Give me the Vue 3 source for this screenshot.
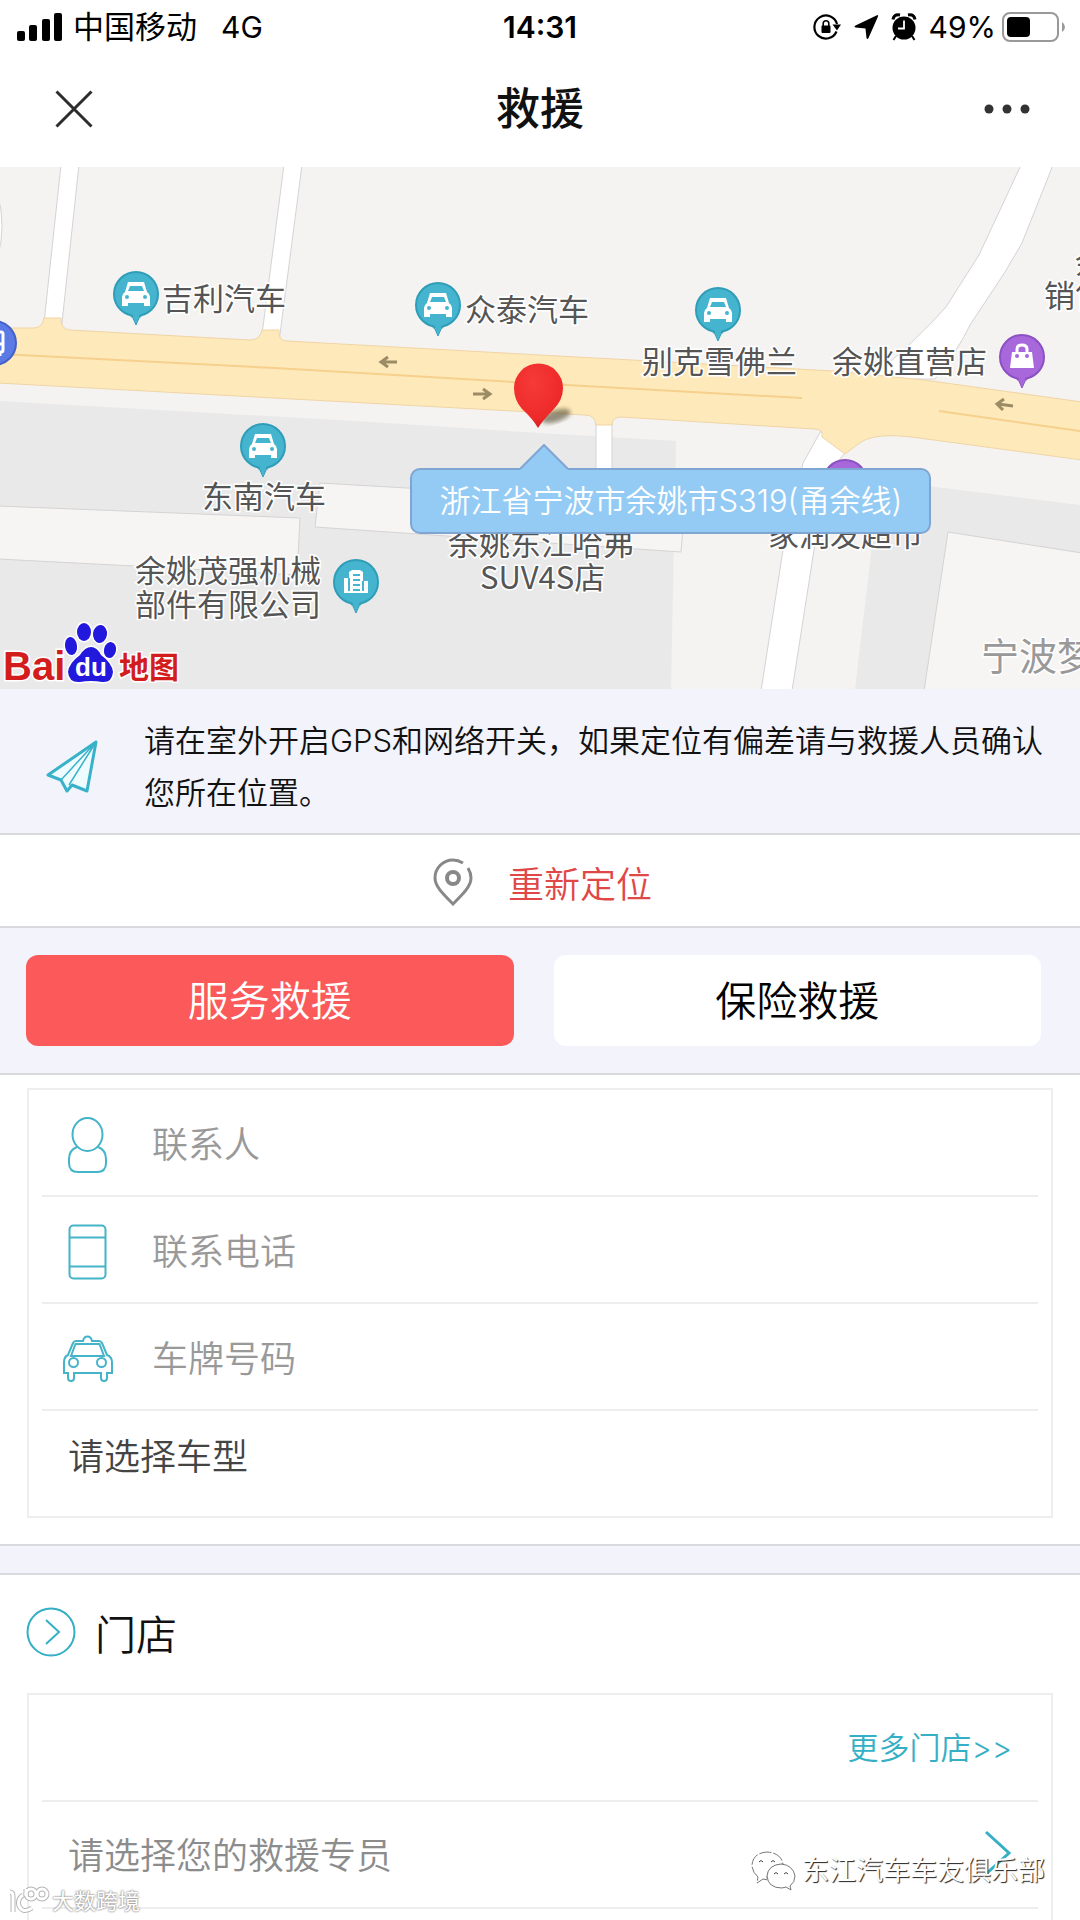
<template>
    <div class="page">
        <header class="status-bar">
            <div class="status-bar__side">
                <svg width="49" height="28" viewBox="0 0 49 28">
                    <rect x="3" y="18" width="8" height="10" rx="2" />
                    <rect x="15" y="12" width="8" height="16" rx="2" />
                    <rect x="28" y="6" width="8" height="22" rx="2" />
                    <rect x="40" y="0" width="8" height="28" rx="2" />
                </svg>
                <span class="status-bar__carrier">中国移动</span>
                <span>4G</span>
            </div>
            <span class="status-bar__time">14:31</span>
            <div class="status-bar__side status-bar__side--right">
                <div class="status-bar__icons">
                    <svg width="28" height="28" viewBox="0 0 28 28">
                        <path d="M23.500 18.500 A11.500 11.500 0 1 1 24 11" fill="none" stroke="#000" stroke-width="2.200" />
                        <path d="M19.500 11.500 H28 L24 17.500 Z" />
                        <rect x="8.500" y="12.500" width="9" height="7.500" rx="1" />
                        <path d="M10.200 13 V10.500 a2.800 2.800 0 0 1 5.600 0 V13" fill="none" stroke="#000" stroke-width="1.600" />
                    </svg>
                    <svg width="26" height="28" viewBox="0 0 26 28">
                        <path d="M24.500 2 Q25.500 2 25 3.500 L15.500 25 Q14.500 27 13.500 25 L12.500 15.500 L2.500 14.500 Q0.500 13.500 2.500 12.500 Z" />
                    </svg>
                    <svg width="26" height="28" viewBox="0 0 26 28">
                        <circle cx="13" cy="15" r="11.500" />
                        <path d="M2 6.500 Q3 1 9 2 M24 6.500 Q23 1 17 2" fill="none" stroke="#000" stroke-width="3" />
                        <path d="M5 23 L2.500 27 M21 23 L23.500 27" stroke="#000" stroke-width="2" />
                        <path d="M13 7.500 V15.500 H7" fill="none" stroke="#fff" stroke-width="1.800" />
                    </svg>
                </div>
                <span>49%</span>
                <svg width="64" height="30" viewBox="0 0 64 30">
                    <rect x="1" y="1" width="55" height="28" rx="7" fill="none" stroke="#999" stroke-width="2" />
                    <rect x="5" y="5" width="23" height="20" rx="4" />
                    <path d="M60 10 Q63 12 63 15 Q63 18 60 20 Z" fill="#999" />
                </svg>
            </div>
        </header>

        <nav class="nav-bar">
            <button class="nav-bar__btn" type="button" aria-label="关闭">
                <svg width="44" height="38" viewBox="0 0 44 38">
                    <path d="M6.500 1.500 L41.500 36.500 M41.500 1.500 L6.500 36.500" stroke="#2c2c2c" stroke-width="3" />
                </svg>
            </button>
            <h1 class="nav-bar__title">救援</h1>
            <button class="nav-bar__btn nav-bar__btn--right" type="button" aria-label="更多">
                <svg width="46" height="10" viewBox="0 0 46 10" fill="#333">
                    <circle cx="5" cy="5" r="4.500" />
                    <circle cx="23" cy="5" r="4.500" />
                    <circle cx="41" cy="5" r="4.500" />
                </svg>
            </button>
        </nav>

        <section class="map">
            <svg class="map__canvas" viewBox="0 0 1080 522" preserveAspectRatio="xMidYMid slice">
                <defs>
                    <radialGradient id="redPin" cx="0.4" cy="0.3" r="0.8">
                        <stop offset="0" stop-color="#f53a38" />
                        <stop offset="0.7" stop-color="#ee2a2a" />
                        <stop offset="1" stop-color="#c41a1c" />
                    </radialGradient>
                    <filter id="soft">
                        <feGaussianBlur stdDeviation="2" />
                    </filter>
                </defs>
                <rect width="1080" height="522" fill="#f4f3f1" />
                <!-- 街区 -->
                <path d="M0 234 L355 254 L540 266 L676 274 L671 522 H0 Z" fill="#e9e9e9" />
                <path d="M880 311 L936 320 L1080 338 V522 H855 Z" fill="#e9e9e9" />
                <g fill="#f6f5f3" stroke="#d5d3d3" stroke-width="1">
                    <path d="M-2 339 L300 351 L297 408 L134 399 L-2 392 Z" />
                    <path d="M320 316 L685 337 L681 385 L315 360 Z" />
                    <path d="M948 365 L1082 386 V524 H924 Z" />
                    <path d="M-2 28 Q6 58 -2 90 Z" fill="#fff" />
                </g>
                <!-- 小路 -->
                <g fill="#fff" stroke="#d4d2d6" stroke-width="1">
                    <path d="M61 -2 L43 165 H61 L79 -2 Z" />
                    <path d="M284 -2 L261 175 H279 L302 -2 Z" />
                    <path d="M1021 -2 L979 88 L946 140 Q915 175 870 212 H935 Q960 180 970 158 L1005 105 L1022 76 L1053 -2 Z" />
                    <path d="M596 245 V310 H612 V245 Z" />
                    <path d="M822 262 L803 296 L783 383 L761 524 H792 L814 383 L833 300 L850 280 Z" />
                </g>
                <!-- 主干道 -->
                <path d="M-2 161 H34 Q42 161 44 151 H61 Q60 162 70 163 L250 173 Q260 173 262 163 H279 Q278 174 287 174 L540 188 L834 204 L924 213 L1082 235 V293 L919 271 Q872 264 857 278 L845 287 L822 270 Q823 262 815 262 L621 250 Q612 250 612 258 H596 Q595 248 585 248 L513 244 L-2 216 Z"
                    fill="#fee9ba" stroke="#f0d4a6" stroke-width="1" />
                <path d="M0 187 L275 201 L513 215 L802 231 M939 244 L1080 264" fill="none" stroke="#f6d08c" stroke-width="2" />
                <g fill="none" stroke="#9c8c66" stroke-width="3">
                    <path d="M397 195 H382 M388 190 L381 195 L388 200" />
                    <path d="M473 227 H489 M483 222 L490 227 L483 232" />
                    <path d="M1013 239 L998 237 M1004 232 L997 237 L1003 243" />
                </g>

                <g v-for="pin in pins" :key="pin.x" :transform="`translate(${pin.x} ${pin.y})`">
                    <path d="M-7 20 Q-2 24 0 31 Q2 24 7 20 Z" :fill="pin.color" :stroke="pin.edge" />
                    <circle r="22" :fill="pin.color" :stroke="pin.edge" stroke-width="2" />
                    <path d="M-4 20 Q-1 24 0 29 Q1 24 4 20 Z" :fill="pin.color" />
                    <g v-if="pin.icon === 'car'">
                        <path d="M-8 -12 H8 L11 -2 Q14 0 14 3 V12 H8 V9 H-8 V12 H-14 V3 Q-14 0 -11 -2 Z" fill="#fff" />
                        <path d="M-6 -8 H6 L8 -3 H-8 Z" :fill="pin.color" />
                        <circle cx="-9" cy="3" r="2" :fill="pin.color" />
                        <circle cx="9" cy="3" r="2" :fill="pin.color" />
                    </g>
                    <g v-if="pin.icon === 'bag'">
                        <path d="M-10 -5 H10 L12 11 H-12 Z" fill="#fff" />
                        <path d="M-5 -4 V-8 Q-5 -12 0 -12 Q5 -12 5 -8 V-4" fill="none" stroke="#fff" stroke-width="3" />
                        <circle cx="-5" cy="-1" r="2" :fill="pin.color" />
                        <circle cx="5" cy="-1" r="2" :fill="pin.color" />
                    </g>
                    <g v-if="pin.icon === 'office'">
                        <path d="M-12 11 V-4 H-7 V-10 L-4 -12 H4 L7 -10 V-1 H12 V11 Z" fill="#fff" />
                        <path d="M-7 -4 V9 M7 -1 V9 M-3 -7 H4 M-3 -2 H4 M-3 3 H4 M-3 8 H4" :stroke="pin.color" stroke-width="2" />
                    </g>
                    <g v-if="pin.icon === 'bus'">
                        <rect x="-8" y="-11" width="17" height="20" rx="2" fill="none" stroke="#fff" stroke-width="3" />
                        <path d="M-8 1 H9 M6 9 V13" stroke="#fff" stroke-width="3" />
                    </g>
                </g>

                <text v-for="label in labels" :key="label.text + label.x" class="map__label" :x="label.x"
                    :y="label.y">{{ label.text }}</text>
                <text class="map__label map__label--area" x="981" y="503">宁波梦</text>

                <ellipse cx="556" cy="249" rx="15" ry="6" fill="#6b6247" opacity="0.7" filter="url(#soft)"
                    transform="rotate(-18 556 249)" />
                <path d="M538 261 Q533 252 522 242 Q514 233 514 221 A24.500 24.500 0 0 1 563 221 Q563 233 553 243 Q543 253 538 261 Z"
                    fill="url(#redPin)" />

                <g>
                    <g stroke="#fff" stroke-width="3" paint-order="stroke" fill="#2319dc">
                        <ellipse cx="84" cy="465" rx="7" ry="9" />
                        <ellipse cx="100" cy="467" rx="7" ry="9" transform="rotate(8 100 467)" />
                        <ellipse cx="71" cy="479" rx="6" ry="9" transform="rotate(-8 71 479)" />
                        <ellipse cx="110" cy="483" rx="6" ry="8" transform="rotate(12 110 483)" />
                        <path d="M91 480 Q97 480 101 488 Q112 496 113 505 Q112 516 102 515 Q91 513 80 515 Q69 516 68 505 Q69 496 80 488 Q85 480 91 480 Z" />
                    </g>
                    <text x="3" y="513" class="map__logo-text map__logo-text--latin">Bai</text>
                    <text x="75" y="509" class="map__logo-du">du</text>
                    <text x="119" y="511" class="map__logo-text">地图</text>
                </g>
            </svg>
            <div class="address">
                <svg class="address__arrow" width="48" height="26" viewBox="0 0 48 26">
                    <path d="M0 25 L24 1 L48 25 V26 H0 Z" fill="#94cbf5" />
                    <path d="M0 25 L24 1 L48 25" fill="none" stroke="#7fa6d2" stroke-width="2" />
                </svg>
                浙江省宁波市余姚市S319(甬余线)
            </div>
        </section>

        <section class="notice">
            <svg width="52" height="54" viewBox="0 0 52 54" fill="none" stroke="#38b2c8" stroke-width="3"
                stroke-linejoin="round">
                <path d="M50 2 L2 35 L15 40 L21 51 L26 45 L41 51 Z" fill="#eefcff" />
                <path d="M50 2 L15 40 M50 2 L23 45" stroke-width="1.500" />
            </svg>
            <p class="notice__text">请在室外开启GPS和网络开关，如果定位有偏差请与救援人员确认您所在位置。</p>
        </section>

        <button class="relocate" type="button">
            <svg width="40" height="48" viewBox="0 0 40 48" fill="none" stroke="#888" stroke-width="3">
                <path d="M30 5 Q25 2 20 2 C10 2 2 10 2 20 C2 28 9 35 20 46 C31 35 38 28 38 20 Q38 15 35 10" />
                <circle cx="20" cy="20" r="6" stroke-width="4" />
            </svg>
            <span>重新定位</span>
        </button>

        <div class="tabs">
            <button v-for="tab in tabs" :key="tab" type="button" class="tabs__btn"
                :class="{ 'tabs__btn--active': tab === activeTab }" @click="activeTab = tab">{{ tab }}</button>
        </div>

        <form class="card card--form" @submit.prevent>
            <label class="row row--field">
                <svg class="row__icon" width="50" height="56" viewBox="0 0 50 56">
                    <path d="M14 30 Q6 33 6 42 V46 Q6 55 15 55 H34 Q43 55 43 46 V42 Q43 33 35 30" />
                    <ellipse cx="24.500" cy="17.500" rx="15" ry="16.500" />
                </svg>
                <input v-model="form.name" class="row__input" type="text" placeholder="联系人" aria-label="联系人" />
            </label>
            <label class="row row--field">
                <svg class="row__icon" width="50" height="56" viewBox="0 0 50 56">
                    <rect x="6.500" y="1.500" width="36" height="53" rx="4" />
                    <path d="M7 13.500 H42 M7 42.500 H42" />
                </svg>
                <input v-model="form.phone" class="row__input" type="tel" placeholder="联系电话" aria-label="联系电话" />
            </label>
            <label class="row row--field">
                <svg class="row__icon" width="50" height="56" viewBox="0 0 50 56">
                    <path d="M20 10 Q21 5.500 24.500 5.500 Q28 5.500 29 10 H36 Q38 10 39 12 L44 24 Q49 26 49 31 V42 H44 V47 Q44 50 41 50 Q38 50 38 47 V42 H11 V47 Q11 50 8 50 Q5 50 5 47 V42 H1 V31 Q1 26 5 24 L10 12 Q11 10 13 10 Z" />
                    <path d="M8 25 L12.500 13 H36.500 L41 25 Z" />
                    <circle cx="10.500" cy="31.500" r="4.500" />
                    <circle cx="38.500" cy="31.500" r="4.500" />
                </svg>
                <input v-model="form.plate" class="row__input" type="text" placeholder="车牌号码" aria-label="车牌号码" />
            </label>
            <div class="row row--select">
                <select v-model="form.model" class="row__select" aria-label="请选择车型">
                    <option value="">请选择车型</option>
                </select>
            </div>
        </form>

        <div class="divider"></div>

        <h2 class="shop-title">
            <svg width="50" height="50" viewBox="0 0 50 50" fill="none" stroke="#35afc5" stroke-width="2">
                <circle cx="25" cy="25" r="23.500" />
                <path d="M20 13 L33 25 L20 37" />
            </svg>
            门店
        </h2>

        <section class="card card--shop">
            <div class="row row--more">
                <a class="more-link" href="#">更多门店&gt;&gt;</a>
            </div>
            <button class="row row--staff" type="button">
                <span>请选择您的救援专员</span>
                <svg width="28" height="48" viewBox="0 0 28 48">
                    <path d="M2 3 L25 24 L2 45" fill="none" stroke="#35afc5" stroke-width="3" />
                </svg>
            </button>
        </section>

        <div class="watermark watermark--left">
            <svg width="42" height="30" viewBox="0 0 42 30" fill="none">
                <g stroke="#b5b5b5" stroke-width="5">
                    <path d="M2 6 Q5 6 5 10 V26 M15 9 Q9 13 11 20 Q15 28 24 22 M18 3 V10" />
                    <circle cx="23" cy="8" r="5" />
                    <circle cx="34" cy="8" r="5" />
                </g>
                <g stroke="#fff" stroke-width="3">
                    <path d="M2 6 Q5 6 5 10 V26 M15 9 Q9 13 11 20 Q15 28 24 22 M18 3 V10" />
                    <circle cx="23" cy="8" r="5" />
                    <circle cx="34" cy="8" r="5" />
                </g>
            </svg>
            <span>大数跨境</span>
        </div>
        <div class="watermark watermark--right">
            <svg width="46" height="42" viewBox="0 0 46 42" fill="#fff" stroke="#777" stroke-width="1">
                <path d="M8 27 Q2 22 2 15 Q3 3 17 2 Q31 3 33 14 Q18 15 17 27 Q17 29 18 30 L13 29 L7 33 Z" stroke-dasharray="12 2" />
                <path d="M40 36 Q45 32 45 26 Q43 15 31 14 Q18 15 17 26 Q18 38 32 38 L36 37 L41 40 Z" />
                <path d="M9 12 Q11 9 13 12 M21 12 Q23 9 25 12 M24 24 Q26 21 28 24 M34 24 Q36 21 38 24" fill="none" stroke="#444" />
            </svg>
            <span>东江汽车车友俱乐部</span>
        </div>
    </div>
</template>

<script setup>
import { ref, reactive } from 'vue';

const tabs = ['服务救援', '保险救援'];
const activeTab = ref('服务救援');

const form = reactive({
    name: '',
    phone: '',
    plate: '',
    model: ''
});

const teal = { color: '#45b5cf', edge: '#2f9db8' };
const purple = { color: '#a868dc', edge: '#8b50c2' };

const pins = [
    { x: 136, y: 127, icon: 'car', ...teal },
    { x: 438, y: 138, icon: 'car', ...teal },
    { x: 718, y: 143, icon: 'car', ...teal },
    { x: 263, y: 279, icon: 'car', ...teal },
    { x: 356, y: 415, icon: 'office', ...teal },
    { x: 1022, y: 190, icon: 'bag', ...purple },
    { x: 845, y: 315, icon: '', ...purple },
    { x: -6, y: 176, icon: 'bus', color: '#5b7ae6', edge: '#4460c8' }
];

const labels = [
    { text: '吉利汽车', x: 162, y: 143 },
    { text: '众泰汽车', x: 465, y: 154 },
    { text: '别克雪佛兰', x: 642, y: 206 },
    { text: '余姚直营店', x: 832, y: 206 },
    { text: '余姚', x: 1075, y: 107 },
    { text: '销售', x: 1044, y: 140 },
    { text: '东南汽车', x: 202, y: 341 },
    { text: '余姚茂强机械', x: 135, y: 415 },
    { text: '部件有限公司', x: 135, y: 449 },
    { text: '余姚东江哈弗', x: 448, y: 388 },
    { text: 'SUV4S店', x: 480, y: 422 },
    { text: '家润发超市', x: 768, y: 379 }
];
</script>

<style>
body {
    margin: 0;
    background: #fff;
}
</style>

<style scoped>
.page {
    position: relative;
    display: flex;
    flex-direction: column;
    min-height: 100vh;
    overflow: hidden;
    background: #fff;
    color: #111;
    font-family: Inter, "Noto Sans CJK SC", sans-serif;
    font-weight: 350;
}

button,
input,
select {
    font: inherit;
    color: inherit;
    border: none;
    background: none;
    padding: 0;
    margin: 0;
    border-radius: 0;
}

button {
    cursor: pointer;
}

svg {
    display: block;
    flex-shrink: 0;
}

.status-bar {
    display: grid;
    grid-template-columns: 1fr auto 1fr;
    align-items: center;
    height: 54px;
    padding: 0 14px;
    font-size: 30px;
    font-weight: 400;
    line-height: 40px;
    color: #000;
}

.status-bar__side {
    display: flex;
    align-items: center;
    gap: 10px;
}

.status-bar__side--right {
    justify-content: flex-end;
    gap: 6px;
}

.status-bar__icons {
    display: flex;
    gap: 12px;
    margin-right: 6px;
}

.status-bar__carrier {
    margin-right: 14px;
    font-size: 31px;
}

.status-bar__time {
    font-weight: 600;
}

.nav-bar {
    display: grid;
    grid-template-columns: 1fr auto 1fr;
    align-items: center;
    box-sizing: border-box;
    height: 113px;
    padding: 0 50px 4px;
}

.nav-bar__btn {
    justify-self: start;
}

.nav-bar__btn--right {
    justify-self: end;
}

.nav-bar__title {
    margin: 0;
    font-size: 44px;
    font-weight: 500;
    line-height: 64px;
}

.map {
    position: relative;
    height: 522px;
    overflow: hidden;
}

.map__canvas {
    width: 100%;
    height: 100%;
}

.map__label {
    font-family: "Noto Sans CJK SC", sans-serif;
    font-size: 31px;
    font-weight: 400;
    fill: #555;
    stroke: #fff;
    stroke-width: 3px;
    paint-order: stroke;
}

.map__label--area {
    font-size: 38px;
    fill: #999;
}

.map__logo-text {
    font-family: "Noto Sans CJK SC", sans-serif;
    font-size: 30px;
    font-weight: 700;
    fill: #d31c1c;
    stroke: #fff;
    stroke-width: 3px;
    paint-order: stroke;
}

.map__logo-text--latin {
    font-family: "Liberation Sans", sans-serif;
    font-size: 40px;
}

.map__logo-du {
    font-family: "Liberation Sans", sans-serif;
    font-size: 26px;
    font-weight: 700;
    fill: #fff;
}

.address {
    position: absolute;
    left: 38%;
    top: 301px;
    box-sizing: border-box;
    height: 66px;
    padding: 0 27px;
    border: 2px solid #7fa6d2;
    border-radius: 10px;
    background: #94cbf5;
    color: #fff;
    font-size: 31px;
    line-height: 62px;
    white-space: nowrap;
}

.address__arrow {
    position: absolute;
    left: 108px;
    top: -26px;
}

.notice {
    display: flex;
    align-items: center;
    gap: 46px;
    padding: 26px 24px 14px 46px;
    border-bottom: 2px solid #d9dade;
    background: #f2f3fb;
}

.notice__text {
    flex: 1;
    margin: 0;
    font-size: 31px;
    line-height: 52px;
}

.relocate {
    display: flex;
    justify-content: center;
    align-items: center;
    gap: 35px;
    height: 93px;
    padding: 2px 0 0 5px;
    border-bottom: 2px solid #d9dade;
    color: #e04848;
    font-size: 36px;
}

.tabs {
    display: grid;
    grid-template-columns: 1fr 1fr;
    gap: 40px;
    padding: 27px 39px 27px 26px;
    border-bottom: 2px solid #d9dade;
    background: #f2f3fb;
}

.tabs__btn {
    height: 91px;
    padding-bottom: 6px;
    border-radius: 12px;
    background: #fff;
    color: #000;
    font-size: 41px;
}

.tabs__btn--active {
    background: #fc5a5a;
    color: #fff;
}

.card {
    margin: 0 27px;
    padding: 0 13px;
    border: 2px solid #eee;
}

.card--form {
    margin-top: 13px;
    margin-bottom: 26px;
}

.card--shop {
    flex: 1;
    border-bottom: none;
}

.row {
    display: flex;
    align-items: center;
    box-sizing: border-box;
    width: 100%;
    height: 107px;
    border-bottom: 2px solid #eee;
    font-size: 36px;
}

.row--field {
    padding-top: 4px;
}

.row__icon {
    margin: 0 39px 0 21px;
    fill: none;
    stroke: #45b3c8;
    stroke-width: 2;
}

.row__input {
    flex: 1;
    min-width: 0;
    outline: none;
}

.row__input::placeholder {
    color: #999;
    opacity: 1;
}

.row--select {
    height: 105px;
    padding: 0 26px 14px;
    border-bottom: none;
}

.row__select {
    flex: 1;
    appearance: none;
    outline: none;
    color: #444;
}

.row--more {
    justify-content: flex-end;
    padding: 0 26px 4px;
}

.more-link {
    color: #35afc5;
    font-size: 31px;
    text-decoration: none;
}

.row--staff {
    justify-content: space-between;
    padding: 0 26px 4px;
    border-bottom: 2px solid #eee;
    color: #8c8c8c;
}

.divider {
    height: 27px;
    border-top: 2px solid #d9dade;
    border-bottom: 2px solid #d9dade;
    background: #f2f3fb;
}

.shop-title {
    display: flex;
    align-items: center;
    gap: 19px;
    box-sizing: border-box;
    height: 118px;
    margin: 0;
    padding: 0 26px 4px;
    font-size: 41px;
    font-weight: 350;
}

.watermark {
    position: absolute;
    display: flex;
    align-items: center;
    color: #fff;
    font-weight: 400;
}

.watermark--left {
    left: 8px;
    bottom: 4px;
    gap: 2px;
    font-size: 22px;
    line-height: 30px;
    text-shadow: 0 0 2px #888, 0 0 2px #888;
}

.watermark--right {
    right: 35px;
    bottom: 28px;
    gap: 6px;
    font-size: 27px;
    line-height: 40px;
    text-shadow: 1px 1px 1px #222;
}
</style>
